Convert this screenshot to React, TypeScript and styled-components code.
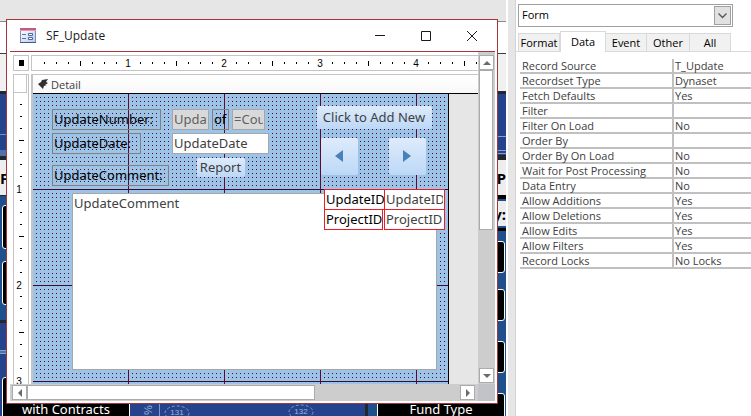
import React, { useState } from "react";
import styled, { createGlobalStyle, css } from "styled-components";

const Global = createGlobalStyle`
  *, *::before, *::after { box-sizing: border-box; }
  html, body { margin: 0; height: 100%; }
  body { font-family: "Noto Sans", "Open Sans", sans-serif; font-size: 11px; color: #404040; background: #fff; overflow: hidden; }
  button, input, textarea, select { font: inherit; color: inherit; margin: 0; border-radius: 0; }
`;

const uiFont = css`
  font-family: "Open Sans", "Noto Sans", sans-serif;
`;

const Screen = styled.div`
  display: grid;
  grid-template-columns: minmax(0, 506fr) 10px minmax(0, 235fr);
  height: 100vh;
`;

/* ---------- workspace behind the window ---------- */

const Workspace = styled.main`
  position: relative;
  display: flex;
  flex-direction: column;
  overflow: hidden;
  background: #e6e6e6;
`;

const Band = styled.div<{ $h: number; $bg: string }>`
  flex: none;
  height: ${(p) => p.$h}px;
  background: ${(p) => p.$bg};
`;

const Heading = styled(Band)<{ $end?: boolean }>`
  display: flex;
  align-items: center;
  justify-content: ${(p) => (p.$end ? "flex-end" : "flex-start")};
  color: #000;
  font-size: 15px;
  font-weight: 700;
  line-height: 20px;
`;

const Panes = styled.div`
  flex: 1;
  display: grid;
  grid-template-columns: minmax(0, 1fr) 3px 138px;
  min-height: 0;
`;

const Pane = styled.div`
  display: flex;
  flex-direction: column;
  overflow: hidden;
  background: #24438c;
`;

const Divider = styled.div`
  background: #22262f;
`;

const Stack = styled.div<{ $gap: number; $grow?: boolean; $pad: string }>`
  flex: ${(p) => (p.$grow ? "1" : "none")};
  display: flex;
  flex-direction: column;
  gap: ${(p) => p.$gap}px;
  padding: ${(p) => p.$pad};
  background: #1f4f8c;
`;

const MenuButton = styled.button<{ $h: number }>`
  flex: none;
  display: grid;
  place-items: center;
  width: 128px;
  height: ${(p) => p.$h}px;
  padding: 0;
  border: 1px solid #fff;
  border-radius: 3px;
  background: #000;
  color: #fff;
  font-size: 13px;
  line-height: 16px;
`;

const BottomRow = styled.div`
  display: flex;
  flex: 1;
  padding-left: 2px;
`;

const Blueprint = styled.svg`
  flex: 1;
  min-width: 0;
  height: 39px;
`;

/* ---------- form window ---------- */

const Window = styled.section`
  position: absolute;
  inset: 19px 8px 12px 6px;
  display: flex;
  flex-direction: column;
  padding: 0 2px 2px 3px;
  border: 1px solid #a4373a;
  background: #fff;
  overflow: hidden;
`;

const TitleBar = styled.header`
  ${uiFont}
  flex: none;
  display: flex;
  align-items: center;
  height: 32px;
  padding-left: 10px;
  border-bottom: 1px solid #a4373a;
  color: #202020;
`;

const WindowTitle = styled.h1`
  flex: 1;
  margin: 0 0 0 10px;
  font-size: 12px;
  line-height: 16px;
  font-weight: 400;
`;

const CaptionButton = styled.button`
  display: grid;
  place-items: center;
  width: 46px;
  height: 30px;
  padding: 0;
  border: 0;
  background: transparent;
  color: #1a1a1a;
`;

const WindowBody = styled.div`
  flex: 1;
  display: grid;
  grid-template-columns: minmax(0, 1fr) 17px;
  grid-template-rows: minmax(0, 1fr) 17px;
  min-height: 0;
`;

const Designer = styled.div`
  display: grid;
  grid-template-columns: 16px minmax(0, 1fr);
  grid-template-rows: 16px minmax(0, 1fr);
  gap: 3px 2px;
  padding: 3px 0 0 3px;
  overflow: hidden;
`;

const Selector = styled.button`
  display: grid;
  place-items: center;
  padding: 0;
  border: 1px solid #c4c4c4;
  background: #fff;
  &::before { content: ""; width: 5px; height: 6px; background: #000; }
`;

const RulerAcross = styled.div`
  display: flex;
  overflow: hidden;
  border: solid #c4c4c4;
  border-width: 1px 0 1px 1px;
  background: #fff;
`;

const RulerDown = styled.div`
  overflow: hidden;
  border: solid #c4c4c4;
  border-width: 1px 1px 0;
  background: #fff;
`;

const SectionHandle = styled.div`
  height: 18px;
  margin-right: 1px;
  border: solid #c4c4c4;
  border-width: 0 1px 1px 0;
`;

const InchAcross = styled.span`
  flex: none;
  display: flex;
  justify-content: flex-end;
  align-items: flex-end;
  width: 96px;
  padding-bottom: 1px;
  background:
    linear-gradient(#000, #000) 48px 5px / 1px 5px no-repeat,
    repeating-linear-gradient(90deg, #000 0 1px, transparent 1px 12px) 12px 6px / 96px 2px no-repeat;
`;

const InchDown = styled.span`
  display: flex;
  align-items: flex-end;
  justify-content: center;
  height: 96px;
  background:
    linear-gradient(#000, #000) 5px 47px / 5px 1px no-repeat,
    repeating-linear-gradient(#000 0 1px, transparent 1px 12px) 6px 11px / 2px 96px no-repeat;
`;

const Numeral = styled.span<{ $down?: boolean }>`
  width: 8px;
  margin: ${(p) => (p.$down ? "0 4px -6px 0" : "0 -4px 0 0")};
  background: #fff;
  color: #000;
  font-family: "Liberation Sans", sans-serif;
  font-size: 10px;
  line-height: 10px;
  text-align: center;
`;

const Surface = styled.div`
  display: flex;
  flex-direction: column;
  min-height: 0;
  border-left: 2px solid #c4c4c4;
  background: #e6e6e6;
`;

const SectionBar = styled.div`
  ${uiFont}
  flex: none;
  display: flex;
  align-items: center;
  gap: 3px;
  height: 20px;
  padding-left: 5px;
  border-top: 1px solid #c4c4c4;
  border-bottom: 1px solid #000;
  background: linear-gradient(#fff, #f8f8f8);
  color: #404040;
  font-size: 11px;
`;

const Canvas = styled.div`
  position: relative;
  flex: 1;
  width: 416px;
  min-height: 0;
  overflow: hidden;
  border-right: 1px solid #000;
  background:
    repeating-linear-gradient(90deg, transparent 0 95px, #5a0a32 95px 96px),
    repeating-linear-gradient(transparent 0 95px, #3a0830 95px 96px),
    conic-gradient(from 270deg at 1px 1px, #4b0a3c 90deg, transparent 0) 3px 3px / 4px 4px,
    #9dc3e6;
`;

type Box = { $x: number; $y: number; $w: number; $h: number };

const placed = css<Box>`
  position: absolute;
  left: ${(p) => p.$x}px;
  top: ${(p) => p.$y}px;
  width: ${(p) => p.$w}px;
  height: ${(p) => p.$h}px;
  font-size: 13px;
  line-height: 18px;
`;

const CanvasLabel = styled.label<Box & { $marked?: boolean }>`
  ${placed}
  padding: 0 0 0 1px;
  overflow: hidden;
  white-space: nowrap;
  border: 1px solid ${(p) => (p.$marked ? "#ed1c24" : "#808080")};
  background: ${(p) => (p.$marked ? "#fff" : "transparent")};
  color: #000;
`;

const Field = styled.input<Box & { $locked?: boolean; $marked?: boolean }>`
  ${placed}
  padding: 0 1px 1px;
  border: 1px solid ${(p) => (p.$marked ? "#ed1c24" : "#a6a6a6")};
  background: ${(p) => (p.$locked ? "#d9d9d9" : "#fff")};
  color: ${(p) => (p.$locked ? "#606060" : "#404040")};
`;

const Memo = styled.textarea<Box>`
  ${placed}
  padding: 0 1px;
  border: 1px solid #a6a6a6;
  background: #fff;
  color: #404040;
  resize: none;
`;

const CommandButton = styled.button<Box>`
  ${placed}
  display: grid;
  place-items: center;
  padding: 0 1px 1px 0;
  border: 0;
  border-radius: 2px;
  background: linear-gradient(#deebfb, #bcd8f7);
  color: #404040;
  white-space: nowrap;
`;

/* ---------- scroll bars ---------- */

const ScrollDown = styled.div`
  display: flex;
  flex-direction: column;
  padding: 3px 2px 1px 1px;
  background: #cdcdcd;
`;

const ScrollAcross = styled.div`
  display: flex;
  padding: 1px 3px 1px 2px;
  background: #cdcdcd;
`;

const ScrollArrow = styled.button`
  flex: none;
  display: grid;
  place-items: center;
  width: 15px;
  height: 15px;
  padding: 0;
  border: 1px solid #ababab;
  background: #fff;
`;

const Thumb = styled.div<{ $across?: boolean }>`
  flex: ${(p) => (p.$across ? "287" : "159")};
  border: 1px solid #ababab;
  background: #fff;
`;

const Track = styled.div<{ $across?: boolean }>`
  flex: ${(p) => (p.$across ? "146" : "138")};
`;

const Corner = styled.div`
  background: #c1c3c8;
`;

/* ---------- property sheet ---------- */

const Splitter = styled.div`
  border: solid;
  border-width: 0 1px 0 2px;
  border-color: #d4d4d4 #d4d4d4 #d4d4d4 #fff;
  background: #e6e6e6;
`;

const Sheet = styled.aside`
  ${uiFont}
  display: flex;
  flex-direction: column;
  background: #fff;
`;

const Combo = styled.div`
  position: relative;
  flex: none;
  height: 23px;
  margin: 4px 18px 0 2px;
`;

const Select = styled.select`
  appearance: none;
  width: 100%;
  height: 100%;
  padding: 0 20px 2px 3px;
  border: 1px solid #a0a0a0;
  background: #fff;
  color: #000;
`;

const Chevron = styled.span`
  position: absolute;
  inset: 2px 2px 2px auto;
  display: grid;
  place-items: center;
  width: 17px;
  border: 1px solid #a0a0a0;
  background: #e1e1e1;
  pointer-events: none;
`;

const Tabs = styled.div`
  flex: none;
  display: flex;
  align-items: flex-end;
  height: 21px;
  margin-top: 4px;
  padding-left: 2px;
  box-shadow: inset 0 -1px #d9d9d9;
`;

const Tab = styled.button<{ $active: boolean; $w: number }>`
  flex: none;
  width: ${(p) => p.$w}px;
  height: ${(p) => (p.$active ? 21 : 19)}px;
  padding: ${(p) => (p.$active ? "0 0 1px" : "1px 0 0")};
  border: solid #d9d9d9;
  border-width: ${(p) => (p.$active ? "1px 1px 0" : "1px 1px 1px 0")};
  background: ${(p) => (p.$active ? "#fff" : "#f1f1f1")};
  color: #000;
  line-height: 16px;
  &:first-child { border-left-width: 1px; }
`;

const PropertyTable = styled.table`
  margin: 7px 0 0 4px;
  border-collapse: separate;
  border-spacing: 0;
  table-layout: fixed;
`;

const PropertyName = styled.th`
  width: 152px;
  height: 15px;
  padding: 0 0 0 2px;
  border-bottom: 2px solid #c0c0c0;
  font-weight: 400;
  text-align: left;
  line-height: 13px;
  white-space: nowrap;
`;

const PropertyValue = styled.td`
  width: 79px;
  height: 15px;
  padding: 0 0 0 1px;
  border: solid #c0c0c0;
  border-width: 0 0 2px 2px;
  line-height: 13px;
  white-space: nowrap;
`;

const tabs: [string, number][] = [["Format", 42], ["Data", 46], ["Event", 41], ["Other", 43], ["All", 41]];

const properties: [string, string][] = [
  ["Record Source", "T_Update"],
  ["Recordset Type", "Dynaset"],
  ["Fetch Defaults", "Yes"],
  ["Filter", ""],
  ["Filter On Load", "No"],
  ["Order By", ""],
  ["Order By On Load", "No"],
  ["Wait for Post Processing", "No"],
  ["Data Entry", "No"],
  ["Allow Additions", "Yes"],
  ["Allow Deletions", "Yes"],
  ["Allow Edits", "Yes"],
  ["Allow Filters", "Yes"],
  ["Record Locks", "No Locks"],
];

function Arrow({ dir }: { dir: "up" | "down" | "left" | "right" }) {
  const d = {
    up: "M0 6 4 2 8 6Z",
    down: "M0 2 4 6 8 2Z",
    left: "M6 0 2 4 6 8Z",
    right: "M2 0 6 4 2 8Z",
  }[dir];
  return (
    <svg width="8" height="8" viewBox="0 0 8 8">
      <path d={d} fill="#6a6a6a" />
    </svg>
  );
}

function NavArrow({ back }: { back?: boolean }) {
  return (
    <svg width="8" height="12" viewBox="0 0 8 12">
      <path d={back ? "M8 0 0 6 8 12Z" : "M0 0 8 6 0 12Z"} fill="#4a80b8" />
    </svg>
  );
}

function FormIcon() {
  return (
    <svg width="16" height="16" viewBox="0 0 16 16">
      <defs>
        <linearGradient id="sheet" x1="0" y1="0" x2="1" y2="1">
          <stop offset="0" stopColor="#ffffff" />
          <stop offset="1" stopColor="#b9c9ea" />
        </linearGradient>
      </defs>
      <path d="M.5 1.500h15v13H.5z" fill="url(#sheet)" stroke="#7c8db5" />
      <path d="M0 0h16v3H0z" fill="#c65a7d" />
      <path d="M0 2h16v1H0z" fill="#e39ab2" />
      <path d="M0 14h16v1H0z" fill="#40588f" />
      <path d="M2 6.500h4M2 10.500h4" stroke="#5a74ad" />
      <path d="M8.500 5.500h4v2h-4zM8.500 9.500h4v2h-4z" fill="#fff" stroke="#48649f" />
    </svg>
  );
}

function Backdrop() {
  return (
    <>
      <Band $h={21} $bg="#e6e6e6" />
      <Band $h={1} $bg="#8a8a8a" />
      <Band $h={31} $bg="#ffffff" />
      <Band $h={1} $bg="#3a3c48" />
      <Band $h={37} $bg="#f0f0f0" />
      <Band $h={3} $bg="#22262f" />
      <Panes>
        <Pane>
          <Band $h={40} $bg="#24438c" />
          <Band $h={1} $bg="#6f8fc4" />
          <Band $h={15} $bg="#24438c" />
          <Band $h={6} $bg="#5270a8" />
          <Band $h={4} $bg="#22262f" />
          <Heading $h={35} $bg="#ededed">F</Heading>
          <Band $h={1} $bg="#22262f" />
          <Stack $gap={12} $pad="9px 0 15px 2px">
            <MenuButton $h={44} aria-label="Menu item" />
            <MenuButton $h={44} aria-label="Menu item" />
          </Stack>
          <Band $h={3} $bg="#22262f" />
          <Band $h={27} $bg="#24438c" />
          <Band $h={1} $bg="#8aa0c8" />
          <Band $h={2} $bg="#5270a8" />
          <Band $h={1} $bg="#8aa0c8" />
          <Band $h={23} $bg="#24438c" />
          <BottomRow>
            <MenuButton $h={64}>with Contracts</MenuButton>
            <Blueprint viewBox="0 0 235 39" preserveAspectRatio="xMinYMin slice">
              <g fill="none" stroke="#7f9aca">
                <path d="M29.500 0v39" />
                <ellipse cx="47" cy="36" rx="12" ry="7" strokeDasharray="3 2" />
                <ellipse cx="171" cy="35" rx="12" ry="7" strokeDasharray="3 2" />
              </g>
              <g fill="#9fb4da" fontSize="8" fontFamily="Liberation Sans" textAnchor="middle">
                <text x="47" y="38">131</text>
                <text x="171" y="37">132</text>
                <text transform="translate(22 33) rotate(-90)" fontSize="11">%</text>
              </g>
            </Blueprint>
          </BottomRow>
        </Pane>
        <Divider />
        <Pane>
          <Band $h={42} $bg="#24438c" />
          <Band $h={1} $bg="#8aa0c8" />
          <Band $h={13} $bg="#24438c" />
          <Band $h={1} $bg="#8aa0c8" />
          <Band $h={2} $bg="#24438c" />
          <Band $h={1} $bg="#8aa0c8" />
          <Band $h={1} $bg="#24438c" />
          <Band $h={5} $bg="#22262f" />
          <Heading $h={35} $bg="#ededed" $end>P</Heading>
          <Band $h={4} $bg="#000000" />
          <Band $h={2} $bg="#1f4f8c" />
          <Heading $h={25} $bg="#ededed" $end>y:</Heading>
          <Band $h={2} $bg="#1f4f8c" />
          <Band $h={3} $bg="#000000" />
          <Stack $gap={0} $pad="10px 0 0 9px">
            <MenuButton $h={32} aria-label="Menu item" />
          </Stack>
          <Stack $gap={20} $grow $pad="16px 0 0 9px">
            <MenuButton $h={32} aria-label="Menu item" />
            <MenuButton $h={32} aria-label="Menu item" />
            <MenuButton $h={32}>Fund Type</MenuButton>
          </Stack>
        </Pane>
      </Panes>
    </>
  );
}

function FormWindow() {
  return (
    <Window>
      <TitleBar>
        <FormIcon />
        <WindowTitle>SF_Update</WindowTitle>
        <CaptionButton aria-label="Minimize">
          <svg width="10" height="10" viewBox="0 0 10 10"><path d="M0 4.500h10" stroke="currentColor" /></svg>
        </CaptionButton>
        <CaptionButton aria-label="Maximize">
          <svg width="10" height="10" viewBox="0 0 10 10"><path d="M.5.5h9v9h-9z" fill="none" stroke="currentColor" /></svg>
        </CaptionButton>
        <CaptionButton aria-label="Close">
          <svg width="10" height="10" viewBox="0 0 10 10"><path d="M0 0 10 10M10 0 0 10" stroke="currentColor" /></svg>
        </CaptionButton>
      </TitleBar>
      <WindowBody>
        <Designer>
          <Selector aria-label="Select form" />
          <RulerAcross>
            {[1, 2, 3, 4].map((n) => (
              <InchAcross key={n}><Numeral>{n}</Numeral></InchAcross>
            ))}
            <InchAcross />
          </RulerAcross>
          <RulerDown>
            <SectionHandle />
            {[1, 2, 3].map((n) => (
              <InchDown key={n}><Numeral $down>{n}</Numeral></InchDown>
            ))}
          </RulerDown>
          <Surface>
            <SectionBar>
              <svg width="10" height="10" viewBox="0 0 10 10">
                <path d="M4 1 10 0 8 3 10 4 7 6H9L6 7 5 10 0 5 3 3Z" fill="#303030" />
              </svg>
              Detail
            </SectionBar>
            <Canvas>
              <CanvasLabel htmlFor="number" $x={19} $y={15} $w={109} $h={21}>UpdateNumber:</CanvasLabel>
              <Field id="number" defaultValue="UpdateNumber" $locked $x={139} $y={15} $w={37} $h={21} />
              <CanvasLabel htmlFor="count" $x={179} $y={15} $w={17} $h={21}>of</CanvasLabel>
              <Field id="count" defaultValue="=Count(*)" $locked $x={199} $y={15} $w={33} $h={21} />
              <CommandButton $x={284} $y={12} $w={115} $h={23}>Click to Add New</CommandButton>
              <CanvasLabel htmlFor="date" $x={19} $y={39} $w={89} $h={21}>UpdateDate:</CanvasLabel>
              <Field id="date" defaultValue="UpdateDate" $x={139} $y={39} $w={97} $h={21} />
              <CommandButton $x={164} $y={64} $w={48} $h={19}>Report</CommandButton>
              <CommandButton aria-label="Previous" $x={288} $y={44} $w={37} $h={37}><NavArrow back /></CommandButton>
              <CommandButton aria-label="Next" $x={356} $y={44} $w={37} $h={37}><NavArrow /></CommandButton>
              <CanvasLabel htmlFor="comment" $x={19} $y={71} $w={117} $h={21}>UpdateComment:</CanvasLabel>
              <Memo id="comment" defaultValue="UpdateComment" $x={39} $y={99} $w={365} $h={177} />
              <CanvasLabel htmlFor="uid" $marked $x={291} $y={95} $w={61} $h={21}>UpdateID</CanvasLabel>
              <CanvasLabel htmlFor="pid" $marked $x={291} $y={115} $w={59} $h={21}>ProjectID</CanvasLabel>
              <Field id="uid" defaultValue="UpdateID" $marked $x={351} $y={95} $w={61} $h={21} />
              <Field id="pid" defaultValue="ProjectID" $marked $x={351} $y={115} $w={61} $h={21} />
            </Canvas>
          </Surface>
        </Designer>
        <ScrollDown>
          <ScrollArrow aria-label="Scroll up"><Arrow dir="up" /></ScrollArrow>
          <Thumb />
          <Track />
          <ScrollArrow aria-label="Scroll down"><Arrow dir="down" /></ScrollArrow>
        </ScrollDown>
        <ScrollAcross>
          <ScrollArrow aria-label="Scroll left"><Arrow dir="left" /></ScrollArrow>
          <Thumb $across />
          <Track $across />
          <ScrollArrow aria-label="Scroll right"><Arrow dir="right" /></ScrollArrow>
        </ScrollAcross>
        <Corner />
      </WindowBody>
    </Window>
  );
}

function PropertySheet() {
  const [active, setActive] = useState("Data");
  return (
    <Sheet>
      <Combo>
        <Select aria-label="Selected object" defaultValue="Form">
          <option>Form</option>
          <option>Detail</option>
        </Select>
        <Chevron>
          <svg width="9" height="6" viewBox="0 0 9 6">
            <path d="M.5.5 4.500 4.500 8.500.5" fill="none" stroke="#555" strokeWidth="1.300" />
          </svg>
        </Chevron>
      </Combo>
      <Tabs role="tablist">
        {tabs.map(([name, width]) => (
          <Tab key={name} role="tab" aria-selected={active === name} $active={active === name} $w={width} onClick={() => setActive(name)}>
            {name}
          </Tab>
        ))}
      </Tabs>
      <PropertyTable>
        <tbody>
          {properties.map(([name, value]) => (
            <tr key={name}>
              <PropertyName scope="row">{name}</PropertyName>
              <PropertyValue>{value}</PropertyValue>
            </tr>
          ))}
        </tbody>
      </PropertyTable>
    </Sheet>
  );
}

export default function App() {
  return (
    <>
      <Global />
      <Screen>
        <Workspace>
          <Backdrop />
          <FormWindow />
        </Workspace>
        <Splitter />
        <PropertySheet />
      </Screen>
    </>
  );
}
